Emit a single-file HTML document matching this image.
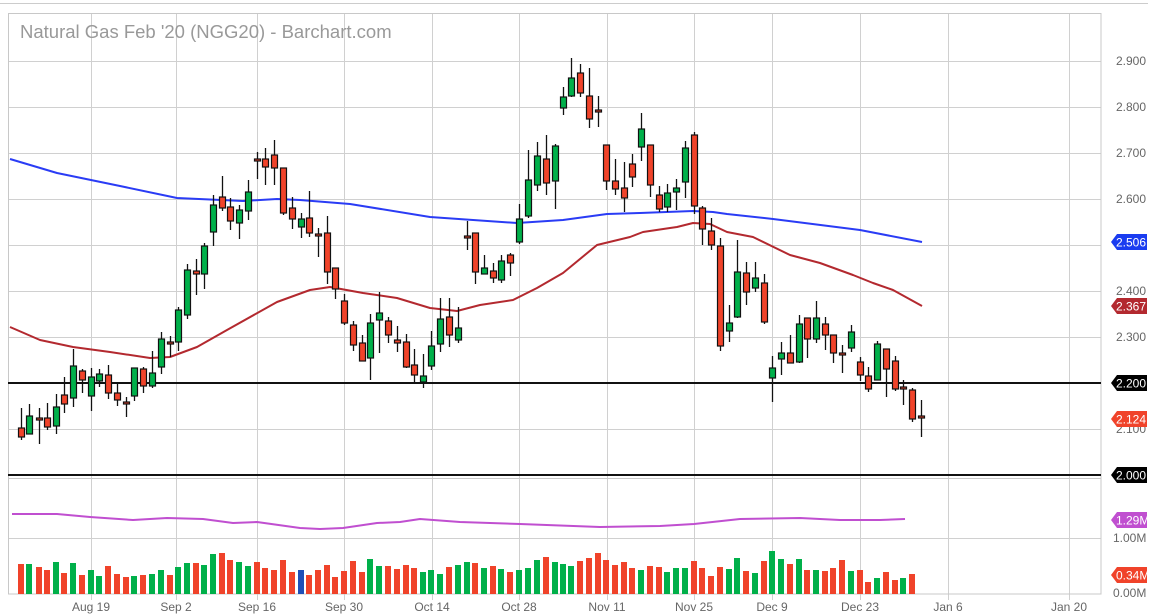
<!DOCTYPE html>
<html><head><meta charset="utf-8">
<style>
html,body{margin:0;padding:0;background:#fff;width:1150px;height:616px;overflow:hidden}
svg{display:block;font-family:"Liberation Sans",sans-serif}
</style></head><body>
<svg id="s" width="1150" height="616" xmlns="http://www.w3.org/2000/svg"></svg>
<script>
var S=document.getElementById('s'),h='';
function L(x1,y1,x2,y2,c,w){h+='<line x1="'+x1+'" y1="'+y1+'" x2="'+x2+'" y2="'+y2+'" stroke="'+c+'" stroke-width="'+(w||1)+'"/>';}
function T(x,y,t,c,s,a){h+='<text x="'+x+'" y="'+y+'" fill="'+c+'" font-size="'+s+'" text-anchor="'+(a||'start')+'">'+t+'</text>';}
L(0,3.5,1148,3.5,'#ccc',1);
var gx=[91,176,257,344,432,519,607,694,772,860,948,1069];
gx.forEach(function(x){L(x+.5,13,x+.5,600,'#d0d0d0',1)});
for(var p=2.0;p<=2.91;p+=0.1){var y=Math.round(429-(p-2.1)*460)+.5;L(8,y,1101,y,'#d0d0d0',1);}
L(8,538.5,1101,538.5,'#d0d0d0',1);
h+='<rect x="8.5" y="13.5" width="1092.5" height="580.5" fill="none" stroke="#c8c8c8"/>';
L(8,478.5,1101,478.5,'#c8c8c8',1);
[[2.9,61],[2.8,107],[2.7,153],[2.6,199],[2.4,291],[2.3,337],[2.1,429]].forEach(function(a){T(1116,a[1]+4,a[0].toFixed(3),'#666',12)});
T(1113,542,'1.00M','#666',12);T(1113,597,'0.00M','#666',12);
T(20,38,"Natural Gas Feb '20 (NGG20) - Barchart.com",'#999',18.5);
[['Aug 19',91],['Sep 2',176],['Sep 16',257],['Sep 30',344],['Oct 14',432],['Oct 28',519],['Nov 11',607],['Nov 25',694],['Dec 9',772],['Dec 23',860],['Jan 6',948],['Jan 20',1069]].forEach(function(a){T(a[1],611,a[0],'#666',12,'middle')});
function P(pts,c,w){h+='<polyline fill="none" stroke="'+c+'" stroke-width="'+w+'" stroke-linejoin="round" points="'+pts.map(function(p){return p.join(',')}).join(' ')+'"/>';}
P([[10,159],[57,173],[120,186],[177,198],[243,201],[277,199],[300,200],[350,204],[430,217],[517,223],[563,220],[607,214],[640,213],[693,211],[713,212],[727,214],[773,219],[860,230],[922,242]],'#2a3cf5',2);
P([[10,327],[40,340],[73,347],[110,352],[150,358],[170,357],[197,347],[227,330],[277,302],[310,290],[330,287],[363,293],[397,298],[430,308],[457,311],[480,305],[513,300],[537,288],[563,273],[597,245],[630,237],[643,232],[670,228],[677,227],[693,223],[710,224],[727,232],[753,237],[790,255],[820,263],[853,275],[873,283],[893,290],[922,306]],'#b3292f',2);
L(8,383,1101,383,'#111',2);L(8,475,1101,475,'#111',2);
var C=[[21,428,437,408,440],[29,434,416,404,434],[39,419,419,408,444],[47,418,427,403,430],[56,426,407,394,434],[64,395,404,377,413],[73,398,366,349,407],[82,371,380,369,393],[91,396,377,368,411],[99,381,374,369,387],[108,375,393,365,399],[117,393,400,383,406],[126,403,403,397,417],[134,396,368,368,401],[143,369,386,367,393],[152,386,373,351,388],[161,367,339,332,374],[170,342,344,336,357],[178,342,310,307,351],[187,315,270,264,319],[196,271,274,259,295],[204,274,246,243,289],[213,232,205,195,246],[222,197,208,176,211],[230,207,221,198,230],[239,223,210,205,239],[248,211,192,180,220],[257,159,161,152,179],[265,159,167,148,185],[274,155,168,140,185],[283,168,213,168,215],[292,208,219,197,229],[301,227,219,213,238],[309,218,233,191,237],[318,234,236,228,257],[327,233,272,216,284],[335,268,289,268,299],[344,301,323,294,325],[353,325,345,321,351],[362,343,361,335,361],[370,358,323,314,380],[379,320,313,292,353],[388,321,335,317,343],[397,341,342,326,352],[406,342,367,334,368],[414,365,375,349,382],[423,382,376,354,388],[431,366,346,331,370],[440,344,319,298,352],[449,317,335,298,347],[458,340,328,307,343],[467,237,237,221,250],[475,233,272,233,284],[484,274,268,255,274],[493,271,278,263,283],[501,280,261,255,283],[510,255,263,253,276],[519,242,219,204,244],[528,216,180,150,218],[537,185,156,142,191],[546,159,183,135,195],[555,181,146,144,209],[563,108,97,87,115],[571,96,78,58,97],[580,73,93,64,97],[589,96,119,68,128],[598,111,111,96,127],[606,145,181,145,190],[615,181,189,159,195],[624,188,198,162,212],[632,164,177,154,187],[641,147,129,113,161],[650,145,185,145,197],[659,195,209,186,212],[667,207,193,184,212],[676,192,188,179,210],[685,182,148,141,198],[694,135,206,132,214],[702,208,229,206,245],[711,231,245,218,250],[720,246,346,238,351],[729,331,323,305,342],[737,317,272,240,318],[746,273,292,262,305],[755,288,278,262,292],[764,283,322,274,324],[772,378,368,356,402],[781,359,353,342,375],[790,353,363,335,363],[799,362,324,315,363],[807,318,339,318,358],[816,339,318,301,343],[825,324,335,317,350],[833,335,353,335,363],[842,354,354,345,373],[851,348,332,325,352],[860,362,375,357,381],[868,376,389,367,392],[877,380,344,341,380],[886,349,369,349,397],[895,361,389,356,391],[903,388,388,380,405],[912,390,419,388,422],[921,416,418,400,437]];
var vt=[252,252,261,270,246,279,249,285,270,288,258,282,291,288,285,282,270,285,261,249,249,255,222,219,240,246,258,246,264,270,240,276,270,285,270,255,291,273,243,276,237,258,258,267,255,264,276,270,282,261,255,246,249,264,258,267,276,270,264,240,231,246,252,258,243,234,219,240,255,246,264,270,258,261,276,264,
264,243,264,288,261,267,234,273,279,243,213,237,252,237,270,270,273,264,240,273,270,306,294,276,300,294,282];
C.forEach(function(c,i){
 var g=c[2]<c[1]||(c[2]==c[1]&&i%2);var col=g?'#00b04a':'#f0432a';
 L(c[0]+.5,c[3],c[0]+.5,c[4],'#111',1.3);
 var t=Math.min(c[1],c[2]),b=Math.max(c[1],c[2]);if(b-t<2){t-=1;b+=1;col='#f0432a'}
 h+='<rect x="'+(c[0]-2.5)+'" y="'+t+'" width="6" height="'+(b-t)+'" fill="'+col+'" stroke="#111" stroke-width="1.2"/>';
 if(i<vt.length){var vy=480+vt[i]/3;
 var vc=g?'#00b04a':'#f0432a'; if(c[0]==301)vc='#1f4fb8';
 h+='<rect x="'+(c[0]-3)+'" y="'+vy.toFixed(1)+'" width="6" height="'+(594-vy).toFixed(1)+'" fill="'+vc+'"/>';}
});
P([[12,514],[57,514],[90,517],[133,520],[167,518],[203,519],[233,523],[257,522],[300,528],[320,529],[343,528],[377,523],[400,522],[420,519],[460,522],[520,524],[600,527],[660,526],[694,524],[740,519],[800,518],[840,520],[880,520],[905,519]],'#c04fd0',2);
function tag(y,t,c){h+='<path d="M1111 '+y+' l6 -8 h30 v16 h-30 z" fill="'+c+'"/>';T(1116,y+4.5,t,'#fff',12);}
tag(242,'2.506','#1a3cf0');tag(306,'2.367','#b3292f');tag(383,'2.200','#000');tag(419,'2.124','#f0432a');tag(475,'2.000','#000');tag(520,'1.29M','#c04fd0');tag(575,'0.34M','#f0432a');
S.innerHTML=h;
</script>
</body></html>
